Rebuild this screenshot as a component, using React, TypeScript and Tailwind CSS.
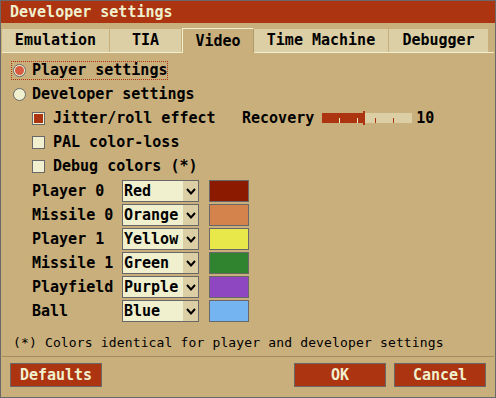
const mono = "font-['DejaVu_Sans_Mono','Liberation_Mono',monospace]";

const tabs = [
  { label: "Emulation", w: "w-[108px]" },
  { label: "TIA", w: "w-[72px]" },
  { label: "Video", w: "w-[72px]", active: true },
  { label: "Time Machine", w: "w-[135px]" },
  { label: "Debugger", w: "w-[100px]" },
];

const colorRows = [
  { label: "Player 0", value: "Red", swatch: "bg-[#8c1a00]" },
  { label: "Missile 0", value: "Orange", swatch: "bg-[#d4834c]" },
  { label: "Player 1", value: "Yellow", swatch: "bg-[#e9e84a]" },
  { label: "Missile 1", value: "Green", swatch: "bg-[#30842f]" },
  { label: "Playfield", value: "Purple", swatch: "bg-[#8e47c0]" },
  { label: "Ball", value: "Blue", swatch: "bg-[#74b4f0]" },
];

const Radio = ({ checked }: { checked?: boolean }) => (
  <svg width="13" height="13" viewBox="0 0 13 13" className="shrink-0">
    <circle cx="6.5" cy="6.5" r="6" fill="#f0f0cf" stroke="#686868" strokeWidth="1" />
    {checked && <circle cx="6.5" cy="6.5" r="4.5" fill="#d85a40" />}
  </svg>
);

const Checkbox = ({ checked }: { checked?: boolean }) => (
  <div className="w-[13px] h-[13px] shrink-0 border border-[#686868] bg-[#f0f0cf] p-[1px]">
    {checked && <div className="w-full h-full bg-[#ac3410]" />}
  </div>
);

const Slider = () => (
  <svg width="90" height="14" viewBox="0 0 90 14" className="shrink-0">
    <rect x="0" y="2" width="90" height="10" fill="#dccfa5" />
    <rect x="0" y="2" width="41" height="10" fill="#ac3410" />
    <rect x="17" y="7" width="1" height="5" fill="#f0f0cf" />
    <rect x="35" y="7" width="1" height="5" fill="#f0f0cf" />
    <rect x="53" y="7" width="1" height="5" fill="#ac3410" />
    <rect x="71" y="7" width="1" height="5" fill="#ac3410" />
    <rect x="41" y="0" width="2" height="14" fill="#ac3410" />
  </svg>
);

const Select = ({ value }: { value: string }) => (
  <div className="w-[77px] h-[22px] flex border border-[#686868] bg-[#f0f0cf]">
    <span className="flex-1 pl-[1px] leading-[20px] whitespace-nowrap">{value}</span>
    <div className="w-[15px] bg-[#dccfa5] flex items-center justify-center">
      <svg width="10" height="7" viewBox="0 0 10 7">
        <polyline points="1,1 5,5.5 9,1" fill="none" stroke="#000" strokeWidth="2" />
      </svg>
    </div>
  </div>
);

const Button = ({ label }: { label: string }) => (
  <div className="w-[92px] h-[24px] flex items-center justify-center border border-[#686868] bg-[#ac3410] text-[#f0f0cf] font-bold">
    {label}
  </div>
);

export default function App() {
  return (
    <div className={`${mono} w-[496px] h-[398px] border border-[#686868] bg-[#c9af7c] text-black text-[15px] flex flex-col whitespace-nowrap`}>
      {/* title */}
      <div className="h-[22px] shrink-0 bg-[#ac3410] text-[#f0f0cf] font-bold pl-[9px] flex items-center">
        Developer settings
      </div>

      {/* tabs */}
      <div className="mt-[5px] h-[25px] flex pl-[1px] font-bold">
        {tabs.map((t) =>
          t.active ? (
            <div
              key={t.label}
              className={`${t.w} h-[25px] border-t border-l border-r border-t-[#f0f0cf] border-l-[#f0f0cf] border-r-[#b49a6a] flex items-center justify-center`}
            >
              {t.label}
            </div>
          ) : (
            <div key={t.label} className={`${t.w} h-[25px] pt-[1px] border-b border-[#f0f0cf] flex`}>
              <div className="flex-1 mr-[1px] bg-[#dccfa5] flex items-center justify-center">{t.label}</div>
            </div>
          )
        )}
        <div className="flex-1 mr-[1px] border-b border-[#f0f0cf]" />
      </div>

      {/* content */}
      <div className="mt-[5px] flex flex-col font-bold">
        <div className="h-[24px] flex items-center">
          <div className="ml-[10px] w-[157px] h-[19px] border border-dotted border-[#ac3410] flex items-center pl-[1px]">
            <Radio checked />
            <span className="ml-[6px] whitespace-nowrap">Player settings</span>
          </div>
        </div>
        <div className="h-[24px] flex items-center pl-[12px]">
          <Radio />
          <span className="ml-[6px]">Developer settings</span>
        </div>
        <div className="h-[24px] flex items-center pl-[31px]">
          <Checkbox checked />
          <span className="ml-[8px] w-[189px]">Jitter/roll effect</span>
          <span>Recovery</span>
          <span className="ml-[8px] flex items-center">
            <Slider />
          </span>
          <span className="ml-[4px]">10</span>
        </div>
        <div className="h-[24px] flex items-center pl-[31px]">
          <Checkbox />
          <span className="ml-[8px]">PAL color-loss</span>
        </div>
        <div className="h-[24px] flex items-center pl-[31px]">
          <Checkbox />
          <span className="ml-[8px]">Debug colors (*)</span>
        </div>

        <div className="mt-[1px] flex flex-col">
          {colorRows.map((r) => (
            <div key={r.label} className="h-[24px] flex items-center pl-[31px]">
              <span className="w-[90px]">{r.label}</span>
              <Select value={r.value} />
              <div className={`ml-[10px] w-[40px] h-[22px] border border-[#686868] ${r.swatch}`} />
            </div>
          ))}
        </div>
      </div>

      {/* footer note */}
      <div className="mt-[12px] h-[16px] flex items-center pl-[12px] text-[13px] font-normal tracking-[0.15px]">
        (*) Colors identical for player and developer settings
      </div>

      <div className="mt-[5px] mx-[1px] border-t border-[#a38c60]" />

      <div className="mt-[6px] flex justify-between px-[9px]">
        <Button label="Defaults" />
        <div className="flex gap-[8px]">
          <Button label="OK" />
          <Button label="Cancel" />
        </div>
      </div>
    </div>
  );
}
